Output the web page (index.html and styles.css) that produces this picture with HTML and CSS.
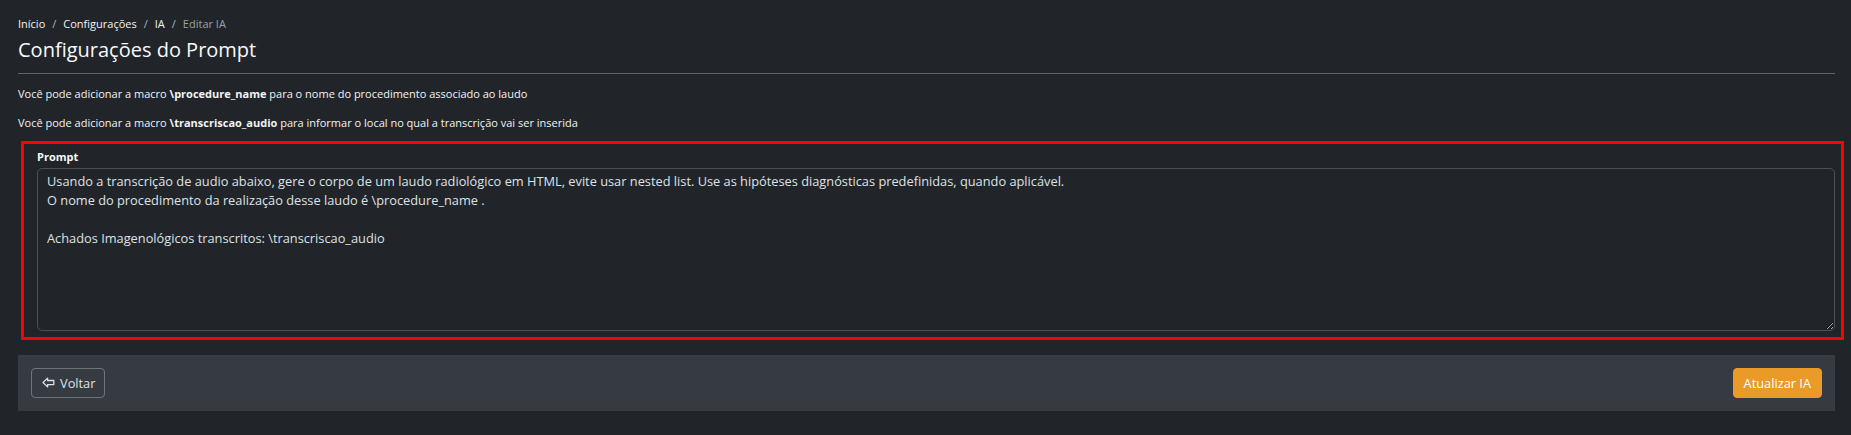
FILE: index.html
```html
<!DOCTYPE html>
<html lang="pt-BR">
<head>
<meta charset="utf-8">
<title>Editar IA</title>
<link rel="stylesheet" href="styles.css">
</head>
<body>
<div class="page">
  <nav class="breadcrumb">
    <a href="#">Início</a><span class="sep">/</span>
    <a href="#">Configurações</a><span class="sep">/</span>
    <a href="#">IA</a><span class="sep">/</span>
    <span class="active">Editar IA</span>
  </nav>
  <h1 class="title">Configurações do Prompt</h1>
  <hr class="divider">
  <p class="hint">Você pode adicionar a macro <b>\procedure_name</b> para o nome do procedimento associado ao laudo</p>
  <p class="hint">Você pode adicionar a macro <b>\transcriscao_audio</b> para informar o local no qual a transcrição vai ser inserida</p>
  <div class="highlight">
    <label class="field-label" for="prompt">Prompt</label>
    <textarea id="prompt" class="field">Usando a transcrição de audio abaixo, gere o corpo de um laudo radiológico em HTML, evite usar nested list. Use as hipóteses diagnósticas predefinidas, quando aplicável.
O nome do procedimento da realização desse laudo é \procedure_name .

Achados Imagenológicos transcritos: \transcriscao_audio</textarea>
  </div>
  <div class="actions">
    <button class="btn btn-back" type="button">
      <svg class="icon" viewBox="0 0 14 12" width="13" height="11" aria-hidden="true">
        <path d="M1 6 L6 1.2 L6 3.8 L12.8 3.8 L12.8 8.2 L6 8.2 L6 10.8 Z" fill="none" stroke="currentColor" stroke-width="1.4" stroke-linejoin="round"/>
      </svg>
      Voltar
    </button>
    <button class="btn btn-save" type="button">Atualizar IA</button>
  </div>
</div>
</body>
</html>
```

FILE: styles.css
```css
* { box-sizing: border-box; }
html, body {
  margin: 0;
  background: #212529;
  color: #dee2e6;
  font-family: "Open Sans", "Noto Sans", sans-serif;
}
.page {
  padding: 15px 16px 0 18px;
}
.breadcrumb {
  display: flex;
  align-items: center;
  font-size: 11px;
  line-height: 17px;
}
.breadcrumb a {
  color: #f1f3f5;
  text-decoration: none;
}
.breadcrumb .sep {
  color: #adb5bd;
  padding: 0 7px;
}
.breadcrumb .active {
  color: #9aa1a8;
}
.title {
  margin: 3px 0 0;
  font-size: 20px;
  font-weight: 400;
  line-height: 30px;
  color: #f8f9fa;
}
.divider {
  margin: 8px 0 12px;
  border: 0;
  border-top: 1px solid #5f646a;
}
.hint {
  margin: 0 0 12px;
  font-size: 11px;
  line-height: 16.5px;
  color: #f1f3f5;
}
.hint b { font-weight: 700; }
.highlight {
  margin: -2px -9px 0 3px;
  border: 3px solid #ff0000;
  padding: 5px 6px 6px 13px;
  display: flex;
  flex-direction: column;
}
.field-label {
  font-size: 11px;
  font-weight: 700;
  line-height: 16.5px;
  color: #f8f9fa;
  margin-bottom: 2px;
}
.field {
  height: 163px;
  background: #212529;
  color: #dee2e6;
  border: 1px solid #495057;
  border-radius: 5px;
  padding: 3px 9px;
  font-family: inherit;
  font-size: 12.8px;
  line-height: 19.2px;
  resize: vertical;
}
.actions {
  margin-top: 15px;
  background: #363a41;
  padding: 13px;
  display: flex;
  justify-content: space-between;
  align-items: center;
}
.btn {
  height: 30px;
  border-radius: 4px;
  font-family: inherit;
  font-size: 12.8px;
  display: inline-flex;
  align-items: center;
  gap: 5px;
  cursor: pointer;
}
.btn-back {
  background: transparent;
  border: 1px solid #6c757d;
  color: #dee2e6;
  padding: 0 9px 0 10px;
}
.btn-save {
  background: #e99a27;
  border: 1px solid #e99a27;
  color: #ffffff;
  padding: 0 10px;
}
.icon { display: block; }
```
